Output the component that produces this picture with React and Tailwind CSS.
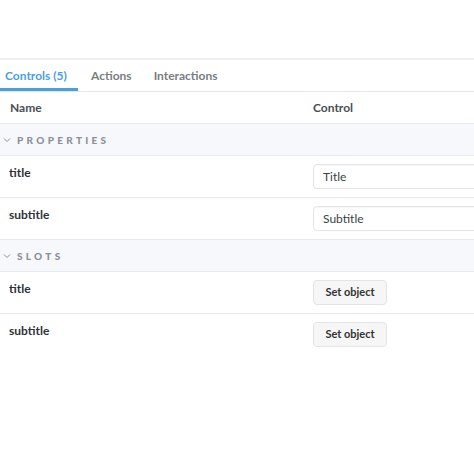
import React from "react";

const font = { fontFamily: 'Lato, "Noto Sans", sans-serif' };

function Chevron() {
  return (
    <svg width="8" height="8" viewBox="0 0 8 8" className="mr-[6px]">
      <path d="M1 2.5 L4 5.5 L7 2.5" fill="none" stroke="#8a8f96" strokeWidth="1" />
    </svg>
  );
}

function Section({ label }) {
  return (
    <div className="flex h-[32px] items-center border-b border-[#e6e9ee] bg-[#f6f8fb] pl-[3px] pt-[1px]">
      <Chevron />
      <span className="text-[10px] font-black uppercase tracking-[0.33em] text-[#8c9096]">{label}</span>
    </div>
  );
}

function Row({ name, children, last }) {
  return (
    <div className={`grid grid-cols-[303px_1fr] ${last ? "" : "border-b border-[#e8e8e8]"}`}>
      <div className="pl-[9px] pt-[9px] text-[12px] font-bold leading-[16px] text-[#2e3338]">{name}</div>
      <div className="pl-[10px] py-[8px]">{children}</div>
    </div>
  );
}

function TextInput({ value }) {
  return (
    <div className="flex h-[25px] w-[200px] items-center rounded-[4px] border border-[#e2e4e7] bg-white pl-[9px] text-[12px] text-[#3a3f44] shadow-[inset_0_1px_1px_rgba(0,0,0,0.03)]">
      {value}
    </div>
  );
}

function SetButton() {
  return (
    <div className="flex h-[25px] w-[74px] items-center justify-center rounded-[4px] border border-[#e4e4e4] bg-[#f6f6f6] text-[11px] font-bold text-[#333]">
      Set object
    </div>
  );
}

export default function App() {
  return (
    <div className="h-[449px] w-[474px] overflow-hidden bg-white" style={font}>
      <div className="h-[58px]" />
      <div className="flex h-[34px] items-stretch border-t-[2px] border-b border-t-[#efefef] border-b-[#e6e6e6]">
        <div className="flex w-[78px] flex-col justify-between">
          <div className="flex flex-1 items-center pl-[5px] pt-[3px] text-[12px] font-bold text-[#4a9fe3]">Controls (5)</div>
          <div className="h-[3px] w-[78px] bg-[#4a9fe3]" />
        </div>
        <div className="flex items-center pl-[13px] pt-[3px] pb-[3px] text-[12px] font-bold text-[#7a7d80]">Actions</div>
        <div className="flex items-center pl-[22px] pt-[3px] pb-[3px] text-[12px] font-bold text-[#7a7d80]">Interactions</div>
      </div>
      <div className="grid h-[32px] grid-cols-[303px_1fr] items-center border-b border-[#e6e9ee] text-[12px] font-bold text-[#4a4e52]">
        <div className="pl-[10px]">Name</div>
        <div className="pl-[10px]">Control</div>
      </div>
      <Section label="properties" />
      <Row name="title">
        <TextInput value="Title" />
      </Row>
      <Row name="subtitle">
        <TextInput value="Subtitle" />
      </Row>
      <Section label="slots" />
      <Row name="title">
        <SetButton />
      </Row>
      <Row name="subtitle" last>
        <SetButton />
      </Row>
    </div>
  );
}
